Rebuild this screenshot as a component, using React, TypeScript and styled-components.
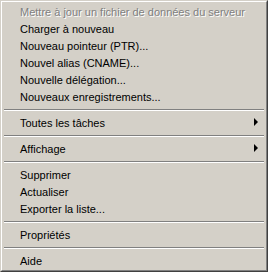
import React from 'react';
import styled, {createGlobalStyle} from "styled-components";

const GlobalStyle = createGlobalStyle`
  html, body {
    margin: 0;
    padding: 0;
    background: #d4d0c8;
  }
`

type Entry = {
    label?: string
    disabled?: boolean
    submenu?: boolean
    separator?: boolean
}

const entries: Entry[] = [
    {label: "Mettre à jour un fichier de données du serveur", disabled: true},
    {label: "Charger à nouveau"},
    {label: "Nouveau pointeur (PTR)..."},
    {label: "Nouvel alias (CNAME)..."},
    {label: "Nouvelle délégation..."},
    {label: "Nouveaux enregistrements..."},
    {separator: true},
    {label: "Toutes les tâches", submenu: true},
    {separator: true},
    {label: "Affichage", submenu: true},
    {separator: true},
    {label: "Supprimer"},
    {label: "Actualiser"},
    {label: "Exporter la liste..."},
    {separator: true},
    {label: "Propriétés"},
    {separator: true},
    {label: "Aide"},
]

export default function App() {
    return (
        <>
            <GlobalStyle/>
            <Menu>
                <Inner>
                    {entries.map((e, i) =>
                        e.separator
                            ? <Separator key={i}/>
                            : <Item key={i} $disabled={e.disabled}>
                                <Label $disabled={e.disabled}>{e.label}</Label>
                                {e.submenu && <Arrow/>}
                            </Item>
                    )}
                </Inner>
            </Menu>
        </>
    );
}

const Menu = styled.div`
  width: 268px;
  height: 272px;
  box-sizing: border-box;
  background: #d4d0c8;
  border: 1px solid;
  border-color: #d4d0c8 #404040 #404040 #d4d0c8;
  font-family: Tahoma, "Liberation Sans", Arial, sans-serif;
  font-size: 11px;
`
const Inner = styled.div`
  height: 100%;
  box-sizing: border-box;
  border: 1px solid;
  border-color: #ffffff #808080 #808080 #ffffff;
  padding: 1px;
  display: flex;
  flex-direction: column;
`
const Item = styled.div<{ $disabled?: boolean }>`
  height: 17px;
  display: flex;
  align-items: center;
  padding-left: 17px;
  padding-right: 6px;
  color: ${p => p.$disabled ? "#808080" : "#000000"};
  white-space: nowrap;
`
const Label = styled.span<{ $disabled?: boolean }>`
  flex: 1;
  text-shadow: ${p => p.$disabled ? "1px 1px 0 #ffffff" : "none"};
`
const Arrow = styled.span`
  width: 0;
  height: 0;
  border-top: 4px solid transparent;
  border-bottom: 4px solid transparent;
  border-left: 4px solid #000000;
  margin-right: 1px;
  margin-top: -1px;
`
const Separator = styled.div`
  height: 9px;
  margin: 0 1px;
  display: flex;
  flex-direction: column;
  justify-content: center;

  &::before {
    content: "";
    height: 1px;
    background: #808080;
  }

  &::after {
    content: "";
    height: 1px;
    background: #ffffff;
  }
`
